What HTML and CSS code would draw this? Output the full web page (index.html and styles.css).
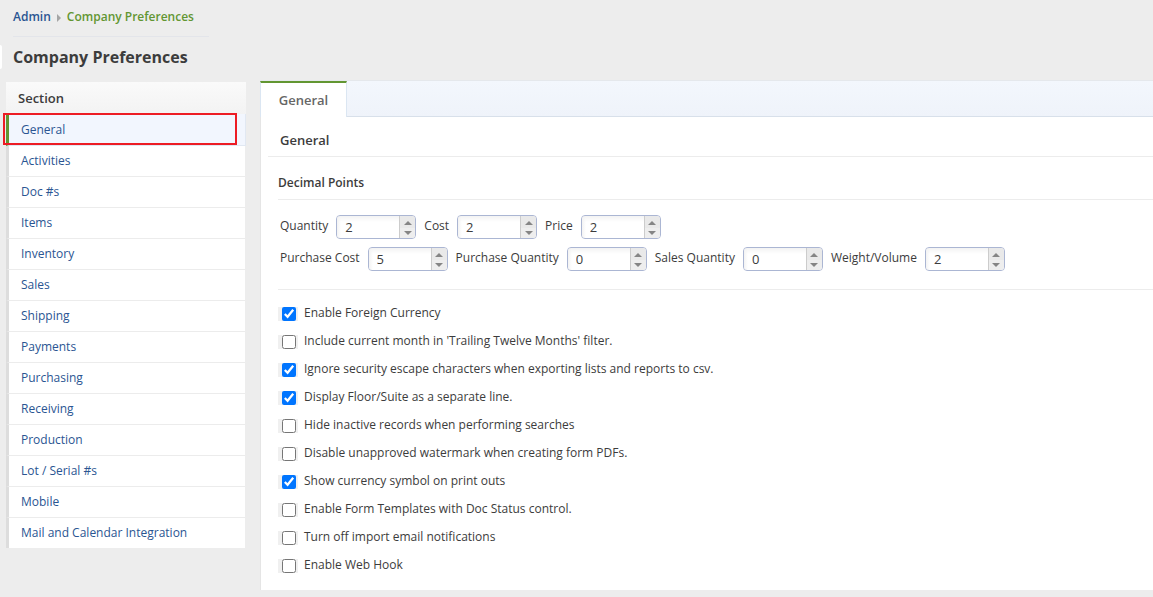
FILE: index.html
```html
<!DOCTYPE html>
<html lang="en">
<head>
<meta charset="utf-8">
<title>Company Preferences</title>
<link rel="stylesheet" href="styles.css">
</head>
<body>
<header class="page-head">
  <nav class="crumbs" aria-label="Breadcrumb">
    <a class="crumb" href="#">Admin</a>
    <svg class="crumb-arrow" width="4" height="8" viewBox="0 0 4 8" aria-hidden="true"><path d="M0 0L4 4L0 8Z" fill="#a5a5a5"/></svg>
    <a class="crumb crumb-current" href="#">Company Preferences</a>
  </nav>
  <div class="title-row">
    <span class="title-mark"></span>
    <h1 class="title">Company Preferences</h1>
  </div>
</header>
<div class="layout">
  <aside class="sidebar">
    <h2 class="sidebar-head">Section</h2>
    <ul class="sections">
      <li class="section selected"><a href="#">General</a><span class="highlight"></span></li>
      <li class="section"><a href="#">Activities</a></li>
      <li class="section"><a href="#">Doc #s</a></li>
      <li class="section"><a href="#">Items</a></li>
      <li class="section"><a href="#">Inventory</a></li>
      <li class="section"><a href="#">Sales</a></li>
      <li class="section"><a href="#">Shipping</a></li>
      <li class="section"><a href="#">Payments</a></li>
      <li class="section"><a href="#">Purchasing</a></li>
      <li class="section"><a href="#">Receiving</a></li>
      <li class="section"><a href="#">Production</a></li>
      <li class="section"><a href="#">Lot / Serial #s</a></li>
      <li class="section"><a href="#">Mobile</a></li>
      <li class="section"><a href="#">Mail and Calendar Integration</a></li>
    </ul>
  </aside>
  <main class="panel">
    <div class="tabs"><button class="tab" type="button">General</button></div>
    <h2 class="panel-title">General</h2>
    <form class="prefs">
      <h3 class="group-title">Decimal Points</h3>
      <div class="fields">
        <div class="field-row">
          <label for="qty">Quantity</label>
          <span class="spinner"><input id="qty" type="number" value="2"><span class="steps"><button type="button" class="step up" aria-label="Increase"></button><button type="button" class="step down" aria-label="Decrease"></button></span></span>
          <label for="cost">Cost</label>
          <span class="spinner"><input id="cost" type="number" value="2"><span class="steps"><button type="button" class="step up" aria-label="Increase"></button><button type="button" class="step down" aria-label="Decrease"></button></span></span>
          <label for="price">Price</label>
          <span class="spinner"><input id="price" type="number" value="2"><span class="steps"><button type="button" class="step up" aria-label="Increase"></button><button type="button" class="step down" aria-label="Decrease"></button></span></span>
        </div>
        <div class="field-row">
          <label for="pcost">Purchase Cost</label>
          <span class="spinner"><input id="pcost" type="number" value="5"><span class="steps"><button type="button" class="step up" aria-label="Increase"></button><button type="button" class="step down" aria-label="Decrease"></button></span></span>
          <label for="pqty">Purchase Quantity</label>
          <span class="spinner"><input id="pqty" type="number" value="0"><span class="steps"><button type="button" class="step up" aria-label="Increase"></button><button type="button" class="step down" aria-label="Decrease"></button></span></span>
          <label for="sqty">Sales Quantity</label>
          <span class="spinner"><input id="sqty" type="number" value="0"><span class="steps"><button type="button" class="step up" aria-label="Increase"></button><button type="button" class="step down" aria-label="Decrease"></button></span></span>
          <label for="wv">Weight/Volume</label>
          <span class="spinner"><input id="wv" type="number" value="2"><span class="steps"><button type="button" class="step up" aria-label="Increase"></button><button type="button" class="step down" aria-label="Decrease"></button></span></span>
        </div>
      </div>
      <div class="options">
        <label class="option"><span class="box"><input type="checkbox" checked></span>Enable Foreign Currency</label>
        <label class="option"><span class="box"><input type="checkbox"></span>Include current month in 'Trailing Twelve Months' filter.</label>
        <label class="option"><span class="box"><input type="checkbox" checked></span>Ignore security escape characters when exporting lists and reports to csv.</label>
        <label class="option"><span class="box"><input type="checkbox" checked></span>Display Floor/Suite as a separate line.</label>
        <label class="option"><span class="box"><input type="checkbox"></span>Hide inactive records when performing searches</label>
        <label class="option"><span class="box"><input type="checkbox"></span>Disable unapproved watermark when creating form PDFs.</label>
        <label class="option"><span class="box"><input type="checkbox" checked></span>Show currency symbol on print outs</label>
        <label class="option"><span class="box"><input type="checkbox"></span>Enable Form Templates with Doc Status control.</label>
        <label class="option"><span class="box"><input type="checkbox"></span>Turn off import email notifications</label>
        <label class="option"><span class="box"><input type="checkbox"></span>Enable Web Hook</label>
      </div>
    </form>
  </main>
</div>
</body>
</html>
```
FILE: styles.css
```css
* { box-sizing: border-box; }

body {
  margin: 0;
  background: #ededed;
  color: #3c3c3c;
  font-family: "Open Sans", sans-serif;
  font-size: 12px;
  line-height: 20px;
}

h1, h2, h3, ul { margin: 0; padding: 0; }
a { color: #2a5592; text-decoration: none; }

.crumbs {
  display: flex;
  align-items: center;
  gap: 6px;
  width: 196px;
  height: 37px;
  margin-left: 13px;
  padding-bottom: 3px;
  border-bottom: 1px solid #e3e5ea;
  font-weight: 600;
  white-space: nowrap;
}
.crumb-arrow { flex: none; margin-top: 2px; }
.crumb-current { color: #629632; }

.title-row {
  display: flex;
  align-items: center;
  height: 43px;
  padding-bottom: 3px;
}
.title-mark {
  width: 2px;
  height: 24px;
  margin-right: 11px;
  background: #fff;
  border-radius: 0 2px 2px 0;
}
.title { font-size: 16px; line-height: 24px; font-weight: 700; }

.layout { display: flex; align-items: flex-start; gap: 14px; }

.sidebar { width: 240px; margin: 2px 0 0 6px; flex: none; }
.sidebar-head {
  height: 32px;
  padding: 0 12px;
  background: linear-gradient(#fafafa, #f3f3f3);
  font-size: 13px;
  line-height: 33px;
  font-weight: 600;
}
.sections { list-style: none; }
.section {
  position: relative;
  height: 31px;
  padding-left: 12px;
  margin-right: 1px;
  background: #fff;
  border-left: 3px solid #ddd;
  border-bottom: 1px solid #ececec;
  line-height: 29px;
}
.section a { display: block; }
.section.selected {
  height: 32px;
  margin-right: 0;
  background: #f2f6fe;
  border-left-color: #629632;
  border-right: 1px solid #e1e8f2;
  border-bottom-color: #e1e8f2;
  line-height: 31px;
}
.section:last-child { height: 30px; border-bottom: 0; }
.highlight {
  position: absolute;
  top: -1px;
  left: -6px;
  right: 8px;
  height: 32px;
  border: 2px solid #ed1c24;
}

.panel {
  flex: 1;
  min-width: 0;
  background: #fff;
  border-left: 1px solid #e5e5e5;
}
.tabs {
  height: 37px;
  margin-left: -1px;
  background: linear-gradient(#f3f7fd, #eff3fa);
  border-top: 1px solid #e5e8ec;
  border-bottom: 1px solid #d8e0ea;
}
.tab {
  display: block;
  width: 87px;
  height: 36px;
  padding: 0;
  background: #fff;
  border: 1px solid #dbe6f2;
  border-top: 2px solid #629632;
  border-bottom: 0;
  color: #666;
  font: 600 13px/34px "Open Sans", sans-serif;
}
.panel-title {
  margin-left: 7px;
  padding: 13px 12px 6px;
  border-bottom: 1px solid #ececec;
  font-size: 13px;
  line-height: 20px;
  font-weight: 600;
}
.prefs { padding: 16px 0 11px 17px; }
.group-title {
  padding-bottom: 6px;
  border-bottom: 1px solid #ececec;
  font-size: 12px;
  font-weight: 600;
}
.fields {
  display: flex;
  flex-direction: column;
  gap: 8px;
  padding: 15px 2px 18px;
  border-bottom: 1px solid #ececec;
}
.field-row { display: flex; gap: 8px; line-height: 22px; white-space: nowrap; }
.spinner {
  display: flex;
  width: 80px;
  height: 24px;
  border: 1px solid #abb6d3;
  border-radius: 4px;
  background: linear-gradient(#f3f3f3, #fff 6px);
  overflow: hidden;
}
.spinner input {
  width: 62px;
  padding: 0 8px;
  border: 0;
  background: linear-gradient(90deg, #f3f3f3, transparent 4px);
  color: #3c3c3c;
  font: 13px/22px "Open Sans", sans-serif;
  appearance: textfield;
}
.spinner input::-webkit-inner-spin-button { display: none; }
.steps {
  flex: 1;
  display: flex;
  flex-direction: column;
  border-left: 1px solid #ccc;
}
.step {
  flex: 1;
  display: flex;
  align-items: center;
  justify-content: center;
  padding: 0;
  border: 0;
  background: #e9e9e9;
}
.step::before {
  content: "";
  border: 4px solid transparent;
}
.up { padding-top: 2px; }
.up::before { border-top: 0; border-bottom-color: #858585; }
.down { background: #eee; }
.down::before { border-bottom: 0; border-top-color: #858585; }

.options { padding-top: 9px; }
.option { display: flex; width: fit-content; height: 28px; padding-top: 4px; }
.box {
  display: flex;
  width: 20px;
  height: 14px;
  margin: 4px 6px 0 0;
  padding-left: 4px;
  background: #f0f0f0;
}
.box input { width: 14px; height: 14px; margin: 0; }
```
